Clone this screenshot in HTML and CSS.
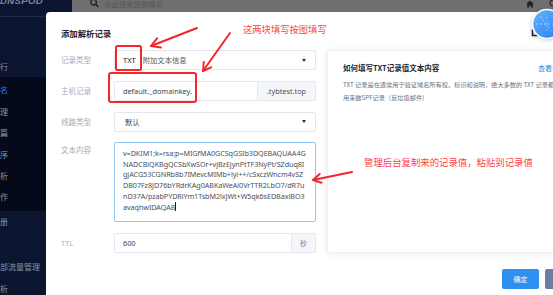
FILE: index.html
```html
<!DOCTYPE html>
<html lang="zh-CN">
<head>
<meta charset="utf-8">
<title>添加解析记录</title>
<link rel="stylesheet" href="styles.css">
</head>
<body>
<div class="app">
  <header class="header">
    <div class="brand"><span class="logo">DNSPOD</span></div>
    <div class="topbar">
      <div class="search">
        <svg class="search-icon" width="9" height="9" viewBox="0 0 9 9"><circle cx="3.6" cy="3.2" r="2.8" fill="none" stroke="#1f1f1f" stroke-width="1.3"/><path d="M5.6 5.2 L8 7.6" stroke="#1f1f1f" stroke-width="1.4" stroke-linecap="round"/></svg>
        <span class="search-ph">点此搜索您的域名</span>
      </div>
      <div class="top-icons">
        <svg width="8" height="8" viewBox="0 0 8 8"><path d="M0.3 3.8 L4 0.4 L7.7 3.8 L6.8 3.8 L6.8 7.6 L4.8 7.6 L4.8 5.4 L3.2 5.4 L3.2 7.6 L1.2 7.6 L1.2 3.8 Z" fill="#222"/></svg>
        <svg width="8" height="8" viewBox="0 0 8 8"><circle cx="4" cy="3" r="3" fill="none" stroke="#222" stroke-width="1.2"/></svg>
      </div>
    </div>
  </header>
  <aside class="sidebar">
    <ul class="nav nav-top">
      <li class="nav-item">行</li>
    </ul>
    <ul class="nav nav-group">
      <li class="nav-item active">名</li>
      <li class="nav-item">理</li>
      <li class="nav-item">篇</li>
      <li class="nav-item">序</li>
      <li class="nav-item">析</li>
      <li class="nav-item">作</li>
    </ul>
    <ul class="nav nav-tail">
      <li class="nav-item">册</li>
      <li class="nav-item"></li>
      <li class="nav-item">部流量管理</li>
      <li class="nav-item">析</li>
    </ul>
  </aside>
</div>

<div class="dialog">
  <div class="dialog-title">添加解析记录</div>
  <div class="dialog-body">
    <div class="form">
      <div class="field">
        <div class="field-label">记录类型</div>
        <div class="control select">
          <span class="val-strong">TXT</span><span class="val-sub">附加文本信息</span><span class="caret"></span>
        </div>
      </div>
      <div class="field">
        <div class="field-label">主机记录</div>
        <div class="group">
          <div class="control group-input">default._domainkey.</div>
          <div class="addon addon-wide">.tybtest.top</div>
        </div>
      </div>
      <div class="field">
        <div class="field-label">线路类型</div>
        <div class="control select">
          <span class="val-cn">默认</span><span class="caret"></span>
        </div>
      </div>
      <div class="field field-top">
        <div class="field-label label-top">文本内容</div>
        <div class="textarea">v=DKIM1;k=rsa;p=MIGfMA0GCSqGSIb3DQEBAQUAA4G<br>NADCBiQKBgQCSbXwSOr+vjBzEjynPtTF3NyPt/SZduq8I<br>gjACG53CGNRb8b7IMevcMIMb+lyi++/cSxczWncm4vSZ<br>DB07Fz8JD76bYRdrKAg0ABKaWeAi0VrTTR2LbO7/dR7u<br>nD37A/pzabPYDRiYm1TsbM2lxJWt+W5qk6sEDBaxlBO3<br>avaqhwIDAQAB<span class="cursor"></span></div>
      </div>
      <div class="field">
        <div class="field-label">TTL</div>
        <div class="group">
          <div class="control group-input">600</div>
          <div class="addon addon-narrow">秒</div>
        </div>
      </div>
    </div>
    <div class="card">
      <div class="card-head">
        <span class="card-title">如何填写TXT记录值文本内容</span>
        <span class="card-link">查看详情</span>
      </div>
      <div class="card-desc">TXT 记录是在通常用于验证域名所有权、标识和说明，绝大多数的 TXT 记录都是<br>用来做SPF记录（反垃圾邮件）</div>
    </div>
  </div>
  <div class="dialog-footer">
    <button class="btn btn-primary">确定</button>
    <button class="btn btn-cancel">取消</button>
  </div>
</div>

<div class="assistant">
  <svg width="40" height="40" viewBox="527 6 40 40">
    <defs>
      <linearGradient id="ag" x1="0" y1="0" x2="1" y2="1">
        <stop offset="0" stop-color="#63b6ff"/>
        <stop offset="1" stop-color="#2b7cf0"/>
      </linearGradient>
    </defs>
    <path d="M532.5 29.5 L532.5 35.5 L537.5 35.5" fill="none" stroke="#1c2333" stroke-width="1.6"/>
    <circle cx="547" cy="24" r="14.5" fill="url(#ag)" stroke="#ffffff" stroke-width="1.6"/>
    <path d="M536 24 H558" stroke="#dff0ff" stroke-width="0.7" stroke-dasharray="2 2"/>
    <path d="M540 16 L552 31" stroke="#dff0ff" stroke-width="0.6" stroke-dasharray="2 2.5"/>
    <path d="M547 17 V31" stroke="#dff0ff" stroke-width="0.5" stroke-dasharray="1.5 2.5"/>
  </svg>
</div>

<svg class="marks" width="553" height="295" viewBox="0 0 553 295">
  <g fill="none" stroke="#f2262b" stroke-width="2" stroke-linecap="round" stroke-linejoin="round">
    <rect x="116" y="46" width="25" height="24" rx="1.5"/>
    <rect x="109" y="73" width="87" height="29" rx="2"/>
    <path d="M197 28 L151 46"/>
    <path d="M160.9 47.5 L151 46 L157.2 38.2"/>
    <path d="M230 33 L203 71"/>
    <path d="M211.2 67.3 L203 71 L203.8 62"/>
    <path d="M352 172 L313 180"/>
    <path d="M321.5 182.8 L313 180 L319.7 174"/>
  </g>
</svg>
<p class="note note-top">这两块填写按图填写</p>
<p class="note note-mid">管理后台复制来的记录值，粘贴到记录值</p>
</body>
</html>
```

FILE: styles.css
```css
* { box-sizing: border-box; }
html, body {
  margin: 0;
  padding: 0;
}
body {
  width: 553px;
  height: 295px;
  overflow: hidden;
  position: relative;
  background: #0c1530;
  font-family: "Noto Sans", "Noto Sans CJK SC", sans-serif;
}
.app {
  display: grid;
  grid-template-columns: 46px 1fr;
  grid-template-rows: 17px 278px;
  height: 295px;
}
.header {
  grid-column: 1 / 3;
  display: flex;
  height: 17px;
}
.brand {
  width: 72px;
  flex: none;
  background: #0c1530;
  border-bottom: 1px solid #1f2942;
  overflow: hidden;
}
.logo {
  display: block;
  margin-top: -4px;
  margin-left: 0;
  font-family: "Liberation Sans", sans-serif;
  font-weight: 700;
  font-style: italic;
  font-size: 9.5px;
  line-height: 10px;
  letter-spacing: 0.4px;
  color: #7d8697;
}
.topbar {
  flex: 1;
  display: flex;
  justify-content: space-between;
  align-items: flex-start;
  background: #6f6f6f;
  overflow: hidden;
}
.search {
  display: flex;
  align-items: center;
  margin-left: 18px;
  margin-top: -1px;
}
.search-ph {
  margin-left: 5px;
  font-family: "Noto Sans CJK SC", sans-serif;
  font-size: 7.4px;
  line-height: 8px;
  color: #555;
}
.top-icons {
  display: flex;
  gap: 15px;
  margin-right: -4px;
  margin-top: 0;
}
.sidebar {
  background: #0c1530;
  padding-top: 39px;
  overflow: hidden;
}
.nav {
  list-style: none;
  margin: 0;
  padding: 0;
}
.nav-item {
  height: 21.4px;
  line-height: 21.4px;
  font-family: "Noto Sans CJK SC", sans-serif;
  font-size: 8px;
  color: #8a93a6;
  white-space: nowrap;
}
.nav-item.active { color: #2f7fe4; }
.nav-group {
  background: #040a1a;
  padding: 2px 0 3px;
}
.nav-tail .nav-item {
  height: 22.5px;
  line-height: 22.5px;
}

/* dialog */
.dialog {
  position: absolute;
  left: 46px;
  top: 12px;
  width: 551px;
  height: 300px;
  background: #fff;
  border-radius: 4px 4px 0 0;
  padding: 15px 15px 0;
  font-family: "Noto Sans", "Noto Sans CJK SC", sans-serif;
}
.dialog-title {
  font-family: "Noto Sans CJK SC", sans-serif;
  font-size: 8.4px;
  font-weight: 700;
  line-height: 12px;
  color: #1f2430;
}
.dialog-body {
  display: flex;
  gap: 11px;
  margin-top: 11px;
}
.form {
  width: 255px;
  flex: none;
  display: flex;
  flex-direction: column;
  gap: 10.75px;
}
.field {
  display: flex;
  align-items: center;
}
.field-top { align-items: flex-start; }
.field-label {
  width: 53px;
  flex: none;
  font-family: "Noto Sans", "Noto Sans CJK SC", sans-serif;
  font-size: 7.5px;
  line-height: 10px;
  color: #a5acb9;
}
.label-top { padding-top: 3px; }
.control {
  width: 202px;
  height: 20px;
  border: 1px solid #e3e6ec;
  border-radius: 2px;
  display: flex;
  align-items: center;
  padding: 0 8px;
  font-size: 7.3px;
  color: #3f4553;
  white-space: nowrap;
}
.select .val-strong {
  font-size: 7.5px;
  color: #222;
}
.select .val-sub {
  margin-left: 7px;
  font-family: "Noto Sans CJK SC", sans-serif;
  font-size: 7.3px;
  color: #555b66;
}
.select .val-cn {
  margin-left: 2px;
  font-family: "Noto Sans CJK SC", sans-serif;
  font-size: 7.3px;
  color: #3f4553;
}
.caret {
  margin-left: auto;
  margin-right: 1px;
  width: 0;
  height: 0;
  border-left: 2.5px solid transparent;
  border-right: 2.5px solid transparent;
  border-top: 3px solid #2a2e36;
}
.group {
  width: 202px;
  height: 20px;
  display: flex;
}
.group-input {
  flex: 1;
  width: auto;
  border-radius: 2px 0 0 2px;
}
.addon {
  flex: none;
  height: 20px;
  display: flex;
  align-items: center;
  justify-content: center;
  background: #f4f6f9;
  border: 1px solid #e3e6ec;
  border-left: none;
  border-radius: 0 2px 2px 0;
  font-size: 7.3px;
  color: #4a505c;
}
.addon-wide { width: 58px; }
.addon-narrow {
  width: 24px;
  font-family: "Noto Sans CJK SC", sans-serif;
  font-size: 6.8px;
  color: #7a808b;
}
.textarea {
  width: 202px;
  height: 80px;
  border: 1px solid #93c6f4;
  border-radius: 2px;
  padding: 4.5px 6px 0 8px;
  font-size: 7.2px;
  line-height: 10.8px;
  color: #4a5060;
  white-space: nowrap;
  overflow: hidden;
  letter-spacing: -0.05px;
}
.cursor {
  display: inline-block;
  width: 1px;
  height: 9px;
  background: #222;
  vertical-align: -1.5px;
}
.card {
  flex: 1;
  height: 203px;
  border: 1px solid #eef0f4;
  border-radius: 3px;
  box-shadow: 0 1px 7px rgba(30, 40, 70, 0.09);
  padding: 11px 15px;
}
.card-head {
  display: flex;
  justify-content: space-between;
  align-items: center;
  line-height: 12px;
}
.card-title {
  font-family: "Noto Sans CJK SC", sans-serif;
  font-size: 7.5px;
  font-weight: 700;
  color: #222833;
}
.card-link {
  font-family: "Noto Sans CJK SC", sans-serif;
  font-size: 7px;
  color: #2d86e8;
}
.card-desc {
  margin-top: 3.5px;
  font-family: "Noto Sans CJK SC", sans-serif;
  font-size: 6.2px;
  line-height: 13px;
  color: #6c7380;
  white-space: nowrap;
}
.dialog-footer {
  display: flex;
  justify-content: flex-end;
  gap: 6px;
  margin-top: 16px;
}
.btn {
  width: 37px;
  height: 20px;
  border: none;
  border-radius: 2px;
  padding: 0;
  font-family: "Noto Sans CJK SC", sans-serif;
  font-size: 7px;
  color: #fff;
}
.btn-primary { background: #2f8ff0; }
.btn-cancel { background: #6b7ea2; }

/* overlays */
.assistant {
  position: absolute;
  left: 527px;
  top: 6px;
  width: 40px;
  height: 40px;
  filter: drop-shadow(0 1px 2px rgba(0, 0, 0, 0.2));
}
.marks {
  position: absolute;
  left: 0;
  top: 0;
  pointer-events: none;
}
.note {
  position: absolute;
  margin: 0;
  font-family: "Noto Sans CJK SC", sans-serif;
  color: #ff3f44;
  white-space: nowrap;
  line-height: 12px;
}
.note-top {
  left: 243px;
  top: 23px;
  font-size: 9.3px;
}
.note-mid {
  left: 364px;
  top: 156px;
  font-size: 9.4px;
}
```
